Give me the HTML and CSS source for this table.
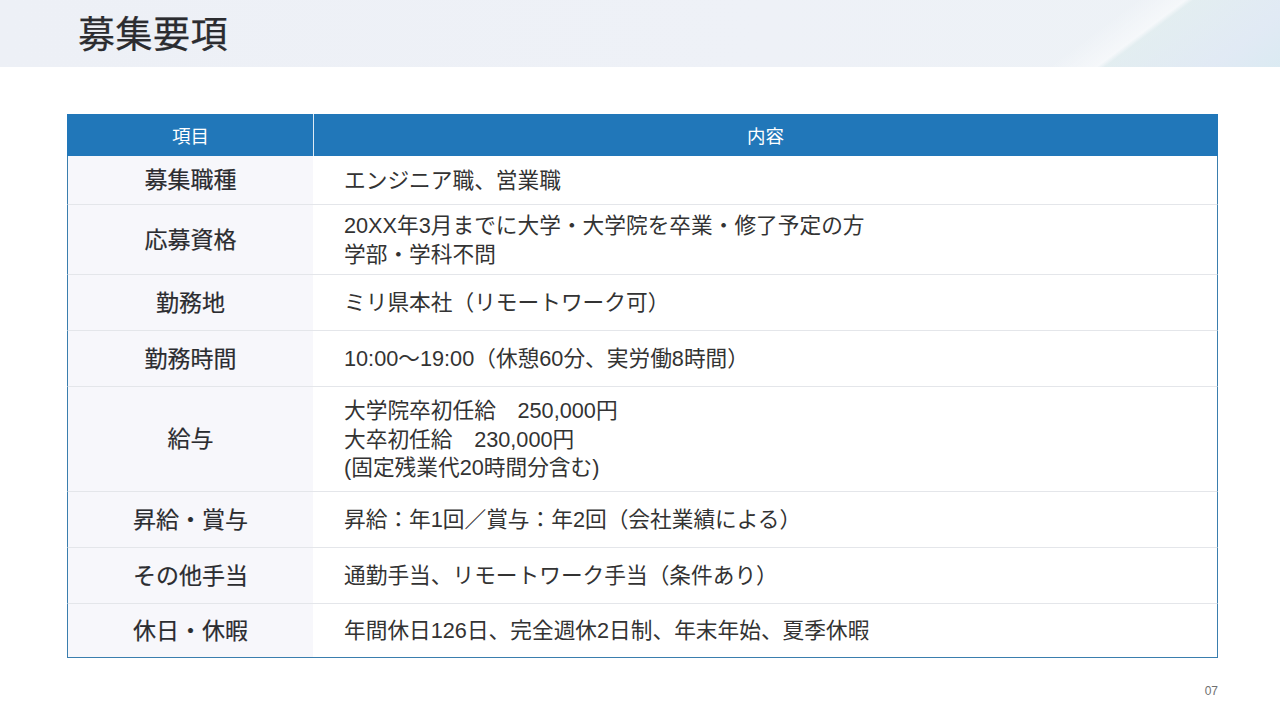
FILE: index.html
```html
<!DOCTYPE html>
<html lang="ja">
<head>
<meta charset="utf-8">
<title>募集要項</title>
<link rel="stylesheet" href="styles.css">
</head>
<body>
<div class="slide">
  <header class="band">
    <h1 class="title">募集要項</h1>
  </header>
  <section class="table">
    <div class="row head">
      <div class="cell label-h">項目</div>
      <div class="cell content-h">内容</div>
    </div>
    <div class="row h48">
      <div class="cell label">募集職種</div>
      <div class="cell content">エンジニア職、営業職</div>
    </div>
    <div class="row h70">
      <div class="cell label">応募資格</div>
      <div class="cell content">20XX年3月までに大学・大学院を卒業・修了予定の方<br>学部・学科不問</div>
    </div>
    <div class="row h56">
      <div class="cell label">勤務地</div>
      <div class="cell content">ミリ県本社（リモートワーク可）</div>
    </div>
    <div class="row h56">
      <div class="cell label">勤務時間</div>
      <div class="cell content">10:00～19:00（休憩60分、実労働8時間）</div>
    </div>
    <div class="row h105">
      <div class="cell label">給与</div>
      <div class="cell content">大学院卒初任給　250,000円<br>大卒初任給　230,000円<br>(固定残業代20時間分含む)</div>
    </div>
    <div class="row h56">
      <div class="cell label">昇給・賞与</div>
      <div class="cell content">昇給：年1回／賞与：年2回（会社業績による）</div>
    </div>
    <div class="row h56">
      <div class="cell label">その他手当</div>
      <div class="cell content">通勤手当、リモートワーク手当（条件あり）</div>
    </div>
    <div class="row h55 last">
      <div class="cell label">休日・休暇</div>
      <div class="cell content">年間休日126日、完全週休2日制、年末年始、夏季休暇</div>
    </div>
  </section>
  <footer class="pager">07</footer>
</div>
</body>
</html>
```

FILE: styles.css
```css
html, body {
  margin: 0;
  padding: 0;
  background: #ffffff;
}
body {
  font-family: "Liberation Sans", "Noto Sans CJK JP", sans-serif;
  color: #333333;
}
.slide {
  width: 1280px;
  height: 720px;
  position: relative;
  overflow: hidden;
  background: #ffffff;
}
.band {
  height: 67px;
  background:
    linear-gradient(143deg, rgba(255,255,255,0) 83%, rgba(255,255,255,0.45) 86.6%, rgba(218,234,236,0.55) 87.2%, rgba(221,231,244,0.75) 95%, rgba(218,234,242,0.95) 100%),
    linear-gradient(90deg, #edf0f6 0%, #eef1f7 60%, #edf2f6 100%);
  display: flex;
  align-items: center;
  padding-left: 78px;
}
.title {
  margin: 0;
  font-family: "Noto Sans CJK JP", sans-serif;
  font-size: 37px;
  font-weight: 400;
  color: #2b2c30;
  letter-spacing: 0.5px;
  line-height: 1;
  padding-bottom: 2px;
  -webkit-text-stroke: 0.25px #2b2c30;
}
.table {
  margin: 47px 0 0 67px;
  width: 1151px;
  display: flex;
  flex-direction: column;
}
.row {
  display: grid;
  grid-template-columns: 245px 1fr;
  border-left: 1px solid #3a7eae;
  border-right: 1px solid #3a7eae;
  box-sizing: border-box;
}
.row + .row {
  border-top: 1px solid #e4e6ea;
}
.row.head {
  height: 42px;
  background: #2177b9;
  border-color: #2177b9;
}
.row.head + .row {
  border-top: none;
}
.row.last {
  border-bottom: 1px solid #3a7eae;
}
.h48 { height: 48px; }
.h70 { height: 70px; }
.h56 { height: 56px; }
.h55 { height: 55px; }
.h105 { height: 105px; }
.cell {
  display: flex;
  align-items: center;
}
.label-h, .content-h {
  justify-content: center;
  color: #ffffff;
  font-family: "Noto Sans CJK JP", sans-serif;
  font-size: 18.5px;
  font-weight: 400;
  padding-bottom: 1px;
}
.content-h {
  border-left: 1px solid rgba(255,255,255,0.85);
}
.label {
  justify-content: center;
  background: #f7f7fb;
  font-family: "Noto Sans CJK JP", sans-serif;
  font-size: 23px;
  font-weight: 400;
  color: #2b2c30;
  -webkit-text-stroke: 0.2px #2b2c30;
  padding-bottom: 4px;
}
.content {
  padding-left: 31px;
  font-size: 21.7px;
  line-height: 28.5px;
  color: #333333;
  background: #ffffff;
  padding-top: 2px;
}
.pager {
  position: absolute;
  right: 62px;
  top: 684px;
  font-size: 12px;
  color: #707070;
  font-family: "Liberation Sans", sans-serif;
}
```
